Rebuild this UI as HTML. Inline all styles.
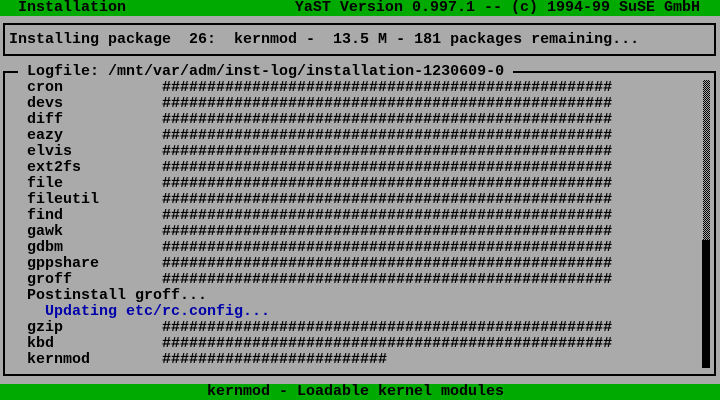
<!DOCTYPE html>
<html><head><style>
body{margin:0;width:720px;height:400px;background:#aaa;position:relative;overflow:hidden;font-family:"Liberation Mono",monospace;font-size:15px;font-weight:bold;color:#000}
.t{position:absolute;white-space:pre;line-height:16px;height:16px}
.bar{position:absolute;left:0;width:720px;height:16px;background:#00aa00}
.b{position:absolute;border:2px solid #000}
</style></head><body>
<div class="bar" style="top:0"></div>
<div class="t" style="top:0;left:18px">Installation</div>
<div class="t" style="top:0;right:20px">YaST Version 0.997.1 -- (c) 1994-99 SuSE GmbH</div>
<div class="b" style="left:3px;top:23px;width:709px;height:29px"></div>
<div class="t" style="top:32px;left:9px">Installing package  26:  kernmod -  13.5 M - 181 packages remaining...</div>
<div class="b" style="left:3px;top:71px;width:709px;height:301px"></div>
<div class="t" style="top:64px;left:18px;background:#aaa"> Logfile: /mnt/var/adm/inst-log/installation-1230609-0 </div>
<div style="position:absolute;left:703px;top:80px;width:7px;height:160px;background:repeating-conic-gradient(#000 0 25%,#aaa 0 50%) 0 0/2px 2px"></div>
<div style="position:absolute;left:702px;top:240px;width:8px;height:128px;background:#000"></div>
<div class="t" style="top:80px;left:27px;height:auto">cron           ##################################################
devs           ##################################################
diff           ##################################################
eazy           ##################################################
elvis          ##################################################
ext2fs         ##################################################
file           ##################################################
fileutil       ##################################################
find           ##################################################
gawk           ##################################################
gdbm           ##################################################
gppshare       ##################################################
groff          ##################################################
Postinstall groff...
  <span style="color:#0000aa">Updating etc/rc.config...</span>
gzip           ##################################################
kbd            ##################################################
kernmod        #########################</div>
<div class="bar" style="top:384px"></div>
<div class="t" style="top:384px;left:207px">kernmod - Loadable kernel modules</div>
</body></html>
